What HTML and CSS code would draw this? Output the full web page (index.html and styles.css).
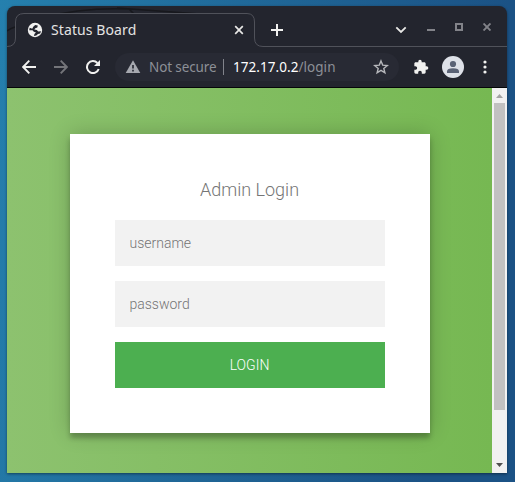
FILE: index.html
```html
<!DOCTYPE html>
<html lang="en">
<head>
<meta charset="utf-8">
<title>Status Board</title>
<link rel="stylesheet" href="styles.css">
</head>
<body>
<div class="window">
  <header class="tabstrip">
    <svg class="tab-outline" viewBox="0 0 500 42" fill="none">
      <path d="M0 25Q4 22 8 21M32 12Q78 1 122 3L128 9M110 2L193 8" stroke="#17181d" stroke-width="1.500"/>
      <path class="tab-shape" d="M0 40.500Q8.500 40.500 8.500 32V16Q8.500 7.500 17 7.500H240Q247.500 7.500 247.500 16V32Q247.500 40.500 256 40.500H500V42H0Z"/>
      <path d="M0 40.500Q8.500 40.500 8.500 32V16Q8.500 7.500 17 7.500H240Q247.500 7.500 247.500 16V32Q247.500 40.500 256 40.500H500" stroke="#50525a"/>
    </svg>
    <div class="tab">
      <svg class="globe" width="16" height="16" viewBox="0 0 16 16"><circle cx="8" cy="8" r="7.200" fill="#f1f1f0"/><path d="M8.200 3L10.800 3.400 10.300 5.600 8.300 6.300 7.300 7.500 9.800 8 11.200 9.600 14 9.300 13.200 11.500 11 12 9.300 13.500 7 14 7.400 11.900 9 10.500 6.800 9.700 5.500 8.300 2.200 8.200 2.700 5.800 5.200 6.800 6.500 4.500Z" fill="#23252e"/></svg>
      <span class="tab-title">Status Board</span>
      <svg class="close" width="10" height="10" viewBox="0 0 10 10"><path d="M1.200 1.200L8.800 8.800M8.800 1.200L1.200 8.800" stroke="#e8e8e6" stroke-width="1.700"/></svg>
    </div>
    <svg class="plus" width="12" height="12" viewBox="0 0 12 12"><path d="M6 0V12M0 6H12" stroke="#f1f1ef" stroke-width="2"/></svg>
    <div class="controls">
      <svg class="chev" width="12" height="8" viewBox="0 0 12 8"><path d="M1.300 1.300L6 6L10.700 1.300" fill="none" stroke="#e8e8e6" stroke-width="1.800"/></svg>
      <svg class="wm" width="8" height="8" viewBox="0 0 8 8"><path d="M0 7H8" stroke="#828389" stroke-width="2"/></svg>
      <svg class="wm" width="8" height="8" viewBox="0 0 8 8"><rect x="1" y="1" width="6" height="6" fill="none" stroke="#828389" stroke-width="2"/></svg>
      <svg class="wm" width="8" height="8" viewBox="0 0 8 8"><path d="M.5 .5L7.500 7.500M7.500 .5L.5 7.500" stroke="#828389" stroke-width="1.900"/></svg>
    </div>
  </header>
  <div class="toolbar">
    <svg class="nav" width="14" height="14" viewBox="0 0 14 14" fill="none" stroke="#f1f1ef" stroke-width="1.900"><path d="M14 7H1.500M7.300 .7L1.200 7L7.300 13.300"/></svg>
    <svg class="nav" width="14" height="14" viewBox="0 0 14 14" fill="none" stroke="#74757a" stroke-width="1.900"><path d="M0 7H12.500M6.700 .7L12.800 7L6.700 13.300"/></svg>
    <svg class="nav" width="14" height="14" viewBox="0 0 14 14"><path d="M12.700 9A6 6 0 1 1 11.400 3" fill="none" stroke="#f1f1ef" stroke-width="2"/><path d="M14 0V6H8Z" fill="#f1f1ef"/></svg>
    <div class="omnibox">
      <svg class="warn" width="16" height="14" viewBox="0 0 16 14"><path d="M8 .3L15.300 13H.7Z" fill="#a6a8af"/><path d="M8 5V8.600M8 9.700V11.500" stroke="#292b35" stroke-width="1.700"/></svg>
      <span class="secure">Not secure</span>
      <span class="divider"></span>
      <span class="url"><b>172.17.0.2</b>/login</span>
      <svg class="star" width="16" height="16" viewBox="0 0 16 16"><path d="M8 1.900L9.700 6.100L14.300 6.450L10.800 9.400L11.900 13.800L8 11.400L4.100 13.800L5.200 9.400L1.700 6.450L6.300 6.100Z" fill="none" stroke="#b6b7bb" stroke-width="1.400"/></svg>
    </div>
    <svg class="puzzle" width="16" height="16" viewBox="0 0 24 24"><path fill="#f1f1ef" d="M20.500 11H19V7c0-1.100-.9-2-2-2h-4V3.500a2.500 2.500 0 0 0-5 0V5H4c-1.100 0-1.990.9-1.990 2v3.800H3.500c1.490 0 2.700 1.210 2.700 2.700s-1.210 2.700-2.700 2.700H2V20c0 1.100.9 2 2 2h3.800v-1.500c0-1.490 1.210-2.700 2.700-2.700 1.490 0 2.700 1.210 2.700 2.700V22H17c1.100 0 2-.9 2-2v-4h1.500a2.500 2.500 0 0 0 0-5z"/></svg>
    <svg class="avatar" width="22" height="22" viewBox="0 0 22 22"><circle cx="11" cy="11" r="11" fill="#dee1e8"/><circle cx="11" cy="8" r="3.100" fill="#5a6275"/><path d="M5 17V15.500Q5 12.300 11 12.300T17 15.500V17Z" fill="#5a6275"/></svg>
    <svg class="dots" width="4" height="14" viewBox="0 0 4 14" fill="#f1f1ef"><circle cx="2" cy="2" r="1.600"/><circle cx="2" cy="7" r="1.600"/><circle cx="2" cy="12" r="1.600"/></svg>
  </div>
  <div class="viewport">
    <main class="page">
      <form class="card">
        <h1>Admin Login</h1>
        <input type="text" placeholder="username">
        <input type="password" placeholder="password">
        <button type="button">LOGIN</button>
      </form>
    </main>
    <div class="scrollbar">
      <svg width="15" height="15" viewBox="0 0 15 15"><path d="M4 10L7.500 6L11 10Z" fill="#a3a3a3"/></svg>
      <div class="thumb"></div>
      <svg class="down" width="15" height="15" viewBox="0 0 15 15"><path d="M4 5H11L7.500 9Z" fill="#505050"/></svg>
    </div>
  </div>
</div>
</body>
</html>
```
FILE: styles.css
```css
* { box-sizing: border-box; }
body {
  margin: 0;
  width: 515px;
  height: 482px;
  padding: 6px 8px 9px 7px;
  overflow: hidden;
  background: linear-gradient(100deg, #2580ae 0%, #206999 40%, #1b5285 85%, #1b5285 100%);
  font-family: "Noto Sans", sans-serif;
}
svg { display: block; flex: none; }
.window {
  width: 500px;
  height: 467px;
  border-radius: 8px 8px 0 0;
  overflow: hidden;
  background: #23252e;
  box-shadow: 0 1px 3px rgba(0, 0, 0, .45);
}
.tabstrip {
  position: relative;
  height: 42px;
  display: flex;
  align-items: flex-start;
}
.tab-outline { position: absolute; inset: 0; width: 500px; height: 42px; }
.tab-shape { fill: #23252e; }
.tab {
  position: relative;
  width: 248px;
  height: 32px;
  margin-top: 8px;
  padding: 0 11px 0 20px;
  display: flex;
  align-items: center;
}
.tab-title {
  margin-left: 8px;
  flex: 1;
  font-size: 14px;
  line-height: 20px;
  letter-spacing: .1px;
  color: #e3e3e2;
}
.plus { position: relative; margin: 18px 0 0 16px; }
.controls {
  position: relative;
  margin-left: auto;
  padding: 17px 16px 0 0;
  display: flex;
  gap: 20px;
}
.chev { margin: 3px 0 0; }
.toolbar {
  height: 40px;
  border-bottom: 1px solid #050608;
  display: flex;
  align-items: center;
  padding: 0 20px 1px 15px;
}
.nav { margin-right: 18px; }
.omnibox {
  width: 284px;
  height: 28px;
  margin-left: -3px;
  border-radius: 14px;
  background: #282a34;
  display: flex;
  align-items: center;
  padding: 0 10px;
  font-size: 13.500px;
  line-height: 20px;
  white-space: nowrap;
}
.secure { width: 67px; margin-left: 8px; letter-spacing: -.12px; color: #8d9097; }
.divider { width: 1px; height: 16px; margin: 0 9px 0 7px; background: #81838b; }
.url { color: #8d9097; letter-spacing: .05px; }
.url b { font-weight: 400; color: #fff; }
.star { margin-left: auto; }
.puzzle { margin-left: 14px; }
.avatar { margin-left: 13px; }
.dots { margin-left: auto; }
.viewport { height: 385px; display: flex; }
.page {
  width: 485px;
  padding-top: 46px;
  background: linear-gradient(to left, #76b852, #8dc26f);
  overflow: hidden;
}
.card {
  width: 360px;
  height: 299px;
  margin: 0 auto;
  padding: 45px;
  background: #fff;
  box-shadow: 0 0 20px rgba(0, 0, 0, .2), 0 5px 5px rgba(0, 0, 0, .24);
  font-family: Roboto, sans-serif;
  text-align: center;
}
.card h1 {
  margin: 0 0 20px;
  font-size: 18px;
  line-height: 21px;
  font-weight: 300;
  color: #757575;
}
.card input, .card button {
  display: block;
  width: 270px;
  height: 46px;
  margin: 0 0 15px;
  padding: 15px;
  border: 0;
  border-radius: 0;
  font: 300 14px/16px Roboto, sans-serif;
}
.card input { background: #f2f2f2; }
.card input::placeholder { color: #757575; }
.card button { margin: 0; background: #4caf50; color: #fff; }
.scrollbar {
  width: 15px;
  background: #f1f1f1;
  display: flex;
  flex-direction: column;
}
.thumb { width: 11px; height: 307px; margin: 0 2px; background: #c1c1c1; }
.down { margin-top: auto; }
```
